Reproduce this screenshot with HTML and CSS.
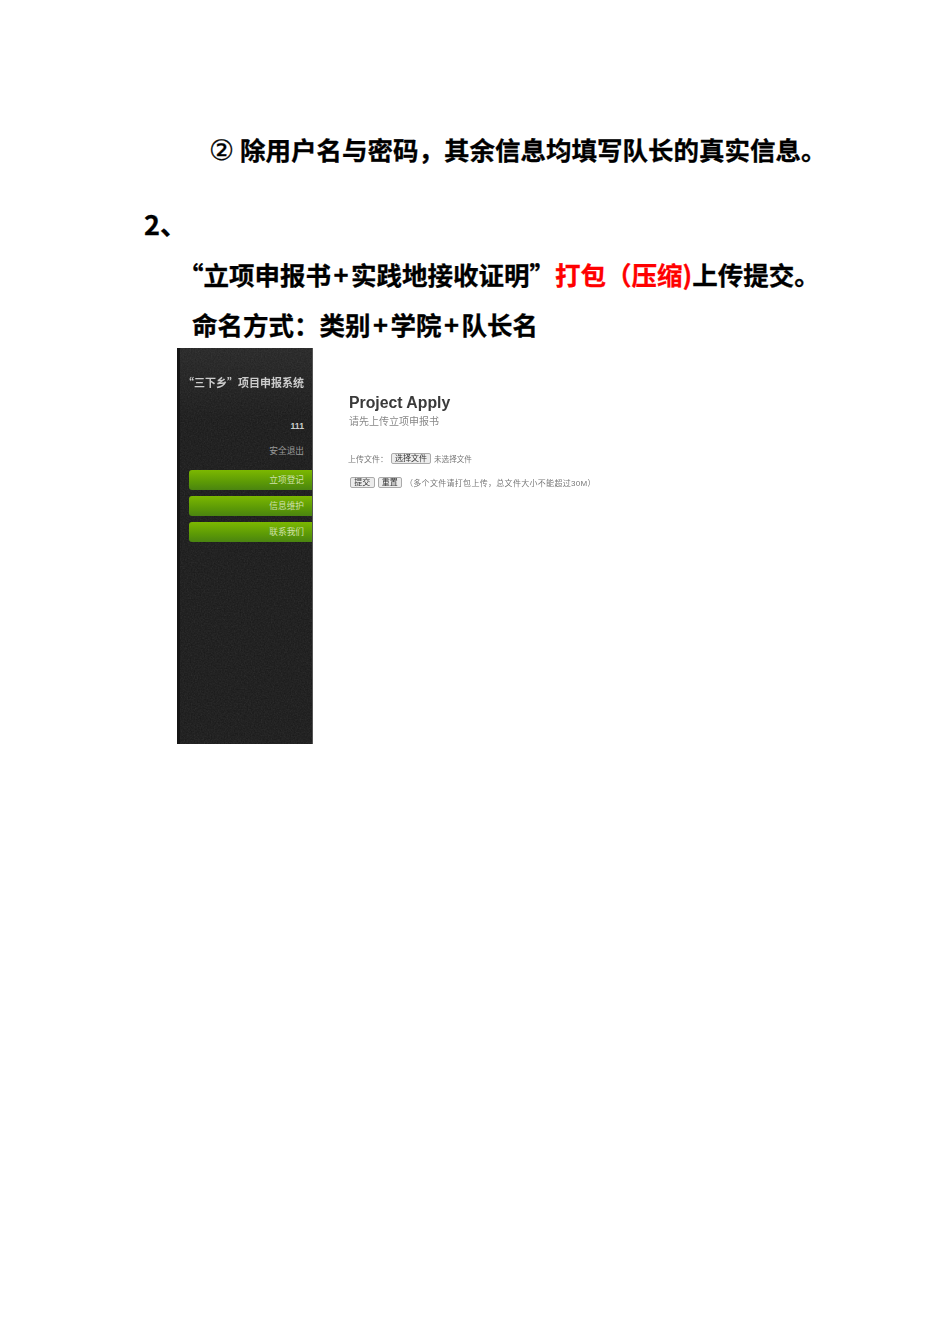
FILE: index.html
```html
<!DOCTYPE html>
<html lang="zh-CN">
<head>
  <meta charset="UTF-8">
  <meta name="viewport" content="width=device-width, initial-scale=1.0">
  <link rel="stylesheet" href="styles.css">
  <title>立项申报</title>
</head>
<body>
  <div class="page">
    <p class="line line-note"><span class="circled">②</span>除用户名与密码，其余信息均填写队长的真实信息。</p>
    <p class="line line-num">2、</p>
    <p class="line line-pack">“立项申报书<span class="plus">+</span>实践地接收证明”<span class="red">打包（压缩)</span>上传提交。</p>
    <p class="line line-name">命名方式：类别<span class="plus">+</span>学院<span class="plus">+</span>队长名</p>

    <div class="shot">
      <div class="sidebar">
        <svg class="grain" width="136" height="396" aria-hidden="true">
          <filter id="noise">
            <feTurbulence type="fractalNoise" baseFrequency="0.7" numOctaves="2" seed="4"/>
            <feColorMatrix type="saturate" values="0"/>
          </filter>
          <rect width="136" height="396" filter="url(#noise)"/>
        </svg>
        <div class="side-title">“三下乡”项目申报系统</div>
        <div class="side-user">111</div>
        <div class="side-logout">安全退出</div>
        <div class="side-btn">立项登记</div>
        <div class="side-btn">信息维护</div>
        <div class="side-btn">联系我们</div>
      </div>
      <div class="apply">
        <h2 class="apply-title">Project Apply</h2>
        <div class="apply-sub">请先上传立项申报书</div>
        <div class="file-row">
          <span>上传文件：</span>
          <span class="fake-btn file-btn">选择文件</span>
          <span class="no-file">未选择文件</span>
        </div>
        <div class="submit-row">
          <span class="fake-btn submit-btn">提交</span>
          <span class="fake-btn submit-btn">重置</span>
          <span class="hint">（多个文件请打包上传，总文件大小不能超过30M）</span>
        </div>
      </div>
    </div>
  </div>
</body>
</html>
```

FILE: styles.css
```css
body {
  margin: 0;
  background-color: #fff;
  font-family: "Liberation Sans", "Noto Sans CJK SC", sans-serif;
}

.page {
  padding-top: 125px;
  height: 1219px;
}

.line {
  margin: 0;
  height: 50px;
  line-height: 47px;
  font-family: "Noto Sans CJK SC", sans-serif;
  font-weight: 700;
  font-size: 25.5px;
  color: #000;
  white-space: nowrap;
  -webkit-text-stroke: 0.3px;
}

.line-note {
  padding-left: 209px;
}

.circled {
  display: inline-block;
  width: 31px;
  font-family: "DejaVu Sans", sans-serif;
  font-size: 28px;
  font-weight: 400;
}

.line-num {
  margin-top: 25px;
  padding-left: 144px;
  font-size: 27px;
}

.line-pack {
  padding-left: 178px;
}

.plus {
  display: inline-block;
  width: 20px;
  text-align: center;
}

.red {
  color: #f00;
}

.line-name {
  height: 48px;
  padding-left: 192px;
}

/* pasted screenshot */
.shot {
  display: flex;
  margin-left: 177px;
  height: 396px;
  font-family: "Liberation Sans", "Noto Sans CJK SC", sans-serif;
}

.sidebar {
  position: relative;
  overflow: hidden;
  box-sizing: border-box;
  width: 136px;
  padding: 26px 0 0 3px;
  text-align: right;
  background-color: #181818;
  background-image: linear-gradient(#242424, #181818 70px, #181818);
  border-left: 3px solid #161616;
  border-right: 1px solid #555;
  color: #aaa;
  font-size: 8.7px;
}

.grain {
  position: absolute;
  top: 0;
  left: 0;
  opacity: 0.13;
}

.side-title {
  position: relative;
  height: 16px;
  line-height: 16px;
  padding-right: 8px;
  font-family: "Noto Sans CJK SC", sans-serif;
  font-size: 11px;
  font-weight: 700;
  color: #ccc;
  white-space: nowrap;
  filter: blur(0.3px);
}

.side-user {
  position: relative;
  margin-top: 30px;
  height: 12px;
  line-height: 12px;
  padding-right: 8px;
  font-weight: 700;
  color: #ccc;
}

.side-logout {
  position: relative;
  margin-top: 13px;
  margin-bottom: 13px;
  height: 12px;
  line-height: 12px;
  padding-right: 8px;
  color: #999;
}

.side-btn {
  position: relative;
  margin-left: 6px;
  margin-bottom: 6px;
  height: 20px;
  line-height: 20px;
  padding-right: 8px;
  border-radius: 3px 0 0 3px;
  background-image: linear-gradient(#7cb800, #5c9a06 60%, #4a8410);
  color: #cfe0ad;
}

.apply {
  padding: 44px 0 0 36px;
  color: #777;
  font-size: 8px;
  filter: blur(0.25px);
}

.apply-title {
  margin: 0;
  height: 21px;
  line-height: 21px;
  font-size: 15.8px;
  font-weight: 700;
  color: #3a3a3a;
}

.apply-sub {
  height: 18px;
  line-height: 18px;
  font-size: 10px;
  color: #888;
}

.file-row {
  display: flex;
  align-items: center;
  gap: 3px;
  margin-top: 21px;
  margin-left: -1px;
  height: 12px;
}

.no-file {
  font-size: 7.6px;
}

.submit-row {
  display: flex;
  align-items: center;
  gap: 3px;
  margin-top: 12px;
  margin-left: 1px;
  height: 12px;
  white-space: nowrap;
}

.hint {
  letter-spacing: 0.3px;
}

.fake-btn {
  box-sizing: border-box;
  height: 11px;
  margin-top: 1px;
  line-height: 9px;
  text-align: center;
  border: 1px solid #aaa;
  border-radius: 2px;
  background-color: #ececec;
  color: #333;
}

.file-btn {
  width: 40px;
}

.submit-btn {
  width: 24.5px;
}
```
